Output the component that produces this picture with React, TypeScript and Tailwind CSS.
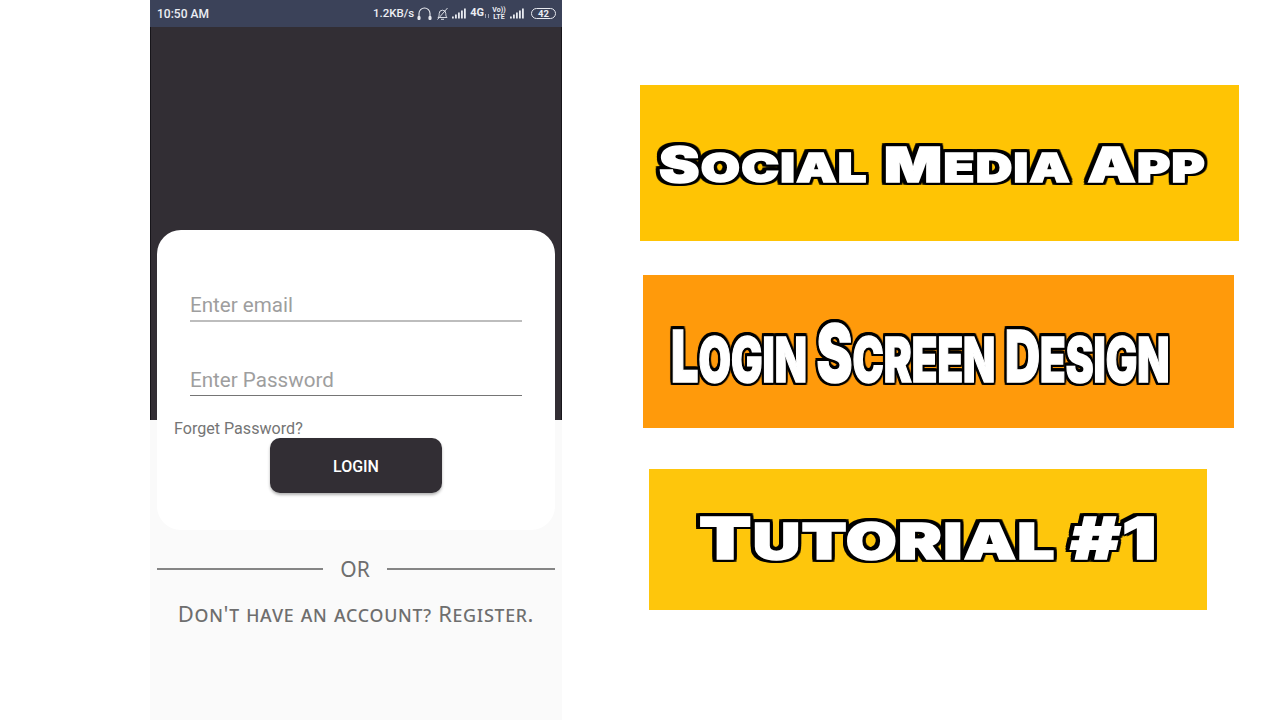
import React from "react";

function Signal({ className }: { className?: string }) {
  return (
    <svg width="15" height="11" viewBox="0 0 15 11" className={className} fill="#e8eaf0">
      <rect x="0" y="8.5" width="1.8" height="2" />
      <rect x="3" y="6.5" width="1.8" height="4" />
      <rect x="6" y="4.5" width="1.8" height="6" />
      <rect x="9" y="2.5" width="1.8" height="8" />
      <rect x="12" y="0.5" width="1.8" height="10" />
    </svg>
  );
}

function StatusBar() {
  return (
    <div className="flex h-[27px] items-center justify-between bg-[#3b4259] pl-[7px] pr-[6px] font-['Roboto',sans-serif] text-[#eceef3]">
      <span className="text-[12px] font-medium">10:50 AM</span>
      <div className="flex items-center">
        <span className="text-[11.5px] font-medium">1.2KB/s</span>
        <svg width="15" height="15" viewBox="0 0 15 15" fill="none" stroke="#e8eaf0" strokeWidth="1.1" className="ml-[3px]">
          <path d="M2 11V7.5a5.5 5.5 0 0 1 11 0V11" />
          <rect x="1" y="10.5" width="2" height="3" rx="0.8" fill="#e8eaf0" />
          <rect x="12" y="10.5" width="2" height="3" rx="0.8" fill="#e8eaf0" />
        </svg>
        <svg width="13" height="14" viewBox="0 0 13 14" fill="none" stroke="#d8dbe3" strokeWidth="1" className="ml-[4px]">
          <path d="M2 10.5c1-1 1.2-2 1.2-4a3.3 3.3 0 0 1 6.6 0c0 2 .2 3 1.2 4z" />
          <path d="M5 12.3h3" />
          <path d="M1.5 12.5 11.5 1" />
        </svg>
        <Signal className="ml-[3px]" />
        <span className="ml-[3px] text-[11px] font-bold">4G</span>
        <span className="ml-[1px] mt-[5px] h-[4px] w-[4px] border-x border-[#9aa0b0]" />
        <span className="ml-[3px] flex w-[14px] flex-col items-center text-[7px] font-bold leading-[7px]">
          <span>Vo))</span>
          <span>LTE</span>
        </span>
        <Signal className="ml-[4px]" />
        <span className="ml-[6px] flex h-[11px] w-[25px] items-center justify-center rounded-full border border-[#e8eaf0] text-[9.5px] font-bold leading-none">
          42
        </span>
      </div>
    </div>
  );
}

function Field({ label, lineClass, heightClass }: { label: string; lineClass: string; heightClass: string }) {
  return (
    <div className={`flex flex-col justify-end ${heightClass}`}>
      <span className="text-[20.6px] leading-[26px] text-[#9e9e9e]">{label}</span>
      <div className={`mt-[2px] ${lineClass}`} />
    </div>
  );
}

function Phone() {
  return (
    <div className="flex h-[720px] w-[412px] shrink-0 flex-col font-['Roboto',sans-serif] [background:linear-gradient(90deg,#17151a_1px,transparent_1px,transparent_411px,#17151a_411px)_0_0/100%_420px_no-repeat,linear-gradient(#322e34_0,#322e34_420px,#fafafa_420px)]">
      <StatusBar />
      <div className="mx-[7px] mt-[203px] flex h-[300px] flex-col rounded-[24px] bg-white">
        <div className="px-[33px]">
          <Field label="Enter email" lineClass="h-[2px] bg-[#bdbdbd]" heightClass="h-[92px]" />
          <Field label="Enter Password" lineClass="h-[1px] bg-[#757575]" heightClass="h-[74px]" />
        </div>
        <div className="pl-[17px] pt-[23px] text-[16.1px] leading-[19px] text-[#757575]">Forget Password?</div>
        <button className="mx-auto flex h-[55px] w-[172px] items-center justify-center rounded-[10px] bg-[#322e34] pt-[2px] text-[16px] font-medium text-white shadow-[0_2px_3px_rgba(0,0,0,0.3)]">
          LOGIN
        </button>
      </div>
      <div className="mx-[7px] mt-[25px] flex items-center justify-between font-['Noto_Sans',sans-serif] text-[#6e6e6e]">
        <div className="h-[2px] w-[166px] bg-[#858585]" />
        <span className="text-[21px] leading-[28px]">OR</span>
        <div className="h-[2px] w-[168px] bg-[#858585]" />
      </div>
      <div className="mt-[16px] whitespace-nowrap text-center font-['Noto_Sans',sans-serif] text-[22px] leading-[28px] tracking-[0.7px] text-[#6e6e6e] [font-variant:small-caps]">
        Don't have an account? Register.
      </div>
    </div>
  );
}

const titleBase =
  "inline-block whitespace-nowrap font-['Inter',sans-serif] font-black leading-none text-white uppercase [-webkit-text-stroke:1.5px_white] [filter:drop-shadow(2.5px_0_0_#000)_drop-shadow(-2.5px_0_0_#000)_drop-shadow(0_2.5px_0_#000)_drop-shadow(0_-2.5px_0_#000)]";

function Word({ big, small, bigClass, smallClass }: { big: string; small: string; bigClass: string; smallClass: string }) {
  return (
    <>
      <span className={bigClass}>{big}</span>
      <span className={smallClass}>{small}</span>
    </>
  );
}

export default function App() {
  const a = "text-[48px]";
  const b = "text-[40px]";
  const c = "text-[72px]";
  const d = "text-[62px]";
  const e = "text-[58px]";
  const f = "text-[50px]";
  return (
    <div className="flex h-[720px] w-[1280px] overflow-hidden bg-white pl-[150px]">
      <Phone />
      <div className="flex flex-col items-start pl-[78px] pt-[85px]">
        <div className="flex h-[156px] w-[599px] items-center bg-[#ffc404] pl-[19px] pt-[4px]">
          <span className={`${titleBase} origin-left scale-x-[1.265] tracking-[1px] [word-spacing:4px]`}>
            <Word big="S" small="ocial " bigClass={a} smallClass={b} />
            <Word big="M" small="edia " bigClass={a} smallClass={b} />
            <Word big="A" small="pp" bigClass={a} smallClass={b} />
          </span>
        </div>
        <div className="ml-[3px] mt-[34px] flex h-[153px] w-[591px] items-center overflow-hidden bg-[#ff9a0b] pl-[28px] pt-[2px]">
          <span className={`${titleBase} origin-left scale-x-[0.675] [word-spacing:2px]`}>
            <Word big="L" small="ogin " bigClass={c} smallClass={d} />
            <Word big="S" small="creen " bigClass="text-[80px]" smallClass={d} />
            <Word big="D" small="esign" bigClass={c} smallClass={d} />
          </span>
        </div>
        <div className="ml-[9px] mt-[41px] flex h-[141px] w-[558px] items-center bg-[#fec60c] pb-[3px] pl-[50px]">
          <span className={`${titleBase} origin-left scale-x-[1.315] tracking-[1px]`}>
            <Word big="T" small="utorial " bigClass={e} smallClass={f} />
            <span className={e}>#1</span>
          </span>
        </div>
      </div>
    </div>
  );
}
